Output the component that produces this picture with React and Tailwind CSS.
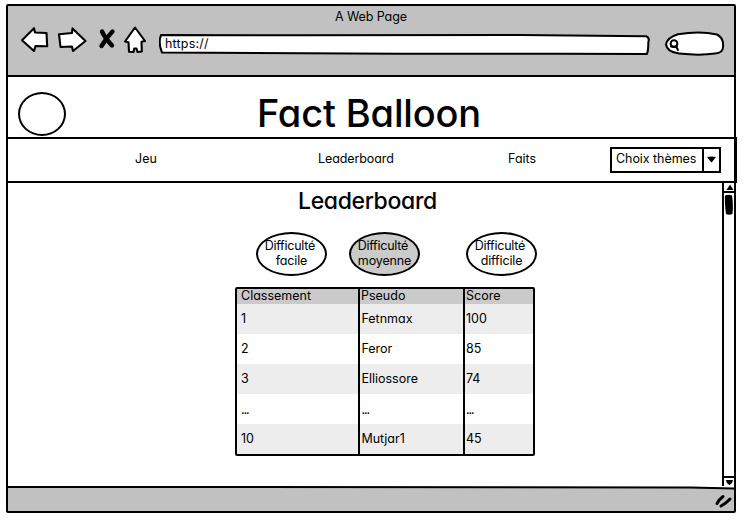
const rows = [
  ["1", "Fetnmax", "100"],
  ["2", "Feror", "85"],
  ["3", "Elliossore", "74"],
  ["...", "...", "..."],
  ["10", "Mutjar1", "45"],
];

function Toolbar() {
  return (
    <header className="flex h-[71px] flex-col border-b-2 border-black bg-[#c1c1c1]">
      <div className="h-[18px] text-center leading-[22px] tracking-[-0.1px]">A Web Page</div>
      <div className="flex h-[36px] pl-[10px]">
        <svg className="h-[36px] w-[136px]" viewBox="18 24 136 36" fill="white" stroke="black" strokeWidth="2.1" strokeLinejoin="round">
          <path d="M22 40.3 L34 28.2 L35 32.5 L46.5 33 L47.2 46.2 L35.5 46 L34 51 Z" />
          <path d="M59 34.2 L72 33 L72.5 28.4 L85.5 41 L73 51 L72 46.5 L60.5 47 Z" />
          <path d="M135 27.5 L145 41 L141.5 41.8 L141.8 51.5 L137.5 52 L136.5 48.5 L134.3 48.5 L133.5 52 L129 51.8 L128.5 42.2 L125 41.5 Z" />
          <path d="M102 31.5 Q105 38 112 45.5 M112.5 31.5 Q107 37 101.5 46" fill="none" strokeWidth="4.4" strokeLinecap="round" />
        </svg>
        <div className="mt-[10px] ml-[5px] flex h-[21px] w-[491px]">
          <svg className="h-[21px] w-[491px] shrink-0" viewBox="159 34 491 21" fill="white" stroke="black" strokeWidth="2" strokeLinejoin="round">
            <path d="M161 35 L300 35.2 L520 35 L646 36.2 Q650 38 648.3 42 Q648.5 50 647 54 L560 53.8 L400 53.8 L162 52.5 Q158 43 161 35 Z" />
          </svg>
          <span className="-ml-[485px] leading-[20px] tracking-[0.2px]">https://</span>
        </div>
        <svg className="mt-[6px] ml-[14px] h-[28px] w-[62px]" viewBox="664 30 62 28" fill="white" stroke="black" strokeWidth="2" strokeLinecap="round">
          <path d="M678 34.2 Q700 30.5 717 34.5 Q724 38 723 47 Q723 53 715 53.5 Q700 55.8 679 53.5 Q667 52 666 44.5 Q667 37.5 678 34.2 Z" />
          <circle cx="674" cy="43.6" r="3.4" />
          <path d="M676 46.5 L678 50 M671 46.5 L677 46.7" />
        </svg>
      </div>
    </header>
  );
}

function Nav() {
  return (
    <nav className="-mx-px flex h-[46px] items-center border-y-2 border-r-2 border-black -mr-[3px]">
      <span className="mb-[2px] ml-[128px] w-[183px] tracking-[0.1px]">Jeu</span>
      <span className="mb-[2px] w-[190px] tracking-[-0.1px]">Leaderboard</span>
      <span className="mb-[2px] w-[102px]">Faits</span>
      <div className="mb-px flex h-[26px] w-[111px] border-2 border-black">
        <span className="w-[92px] border-r-2 border-black pl-[4px] leading-[20px] whitespace-nowrap tracking-[-0.05px]">Choix thèmes</span>
        <svg className="mt-[7px] ml-[2px] h-[7px] w-[11px]" viewBox="0 0 11 7">
          <path d="M1 1 Q5.5 0 10 1 L6 6 Q5.5 6.5 5 6 Z" />
        </svg>
      </div>
    </nav>
  );
}

function Difficulty({ label, className }) {
  return (
    <div className={"flex h-[44px] w-[71px] flex-col items-center justify-center rounded-[50%] border-2 border-black pb-[2px] leading-[15px] whitespace-pre " + className}>
      <span className="tracking-[-0.25px]">{"Difficulté "}</span>
      <span className="tracking-[-0.15px]">{label}</span>
    </div>
  );
}

function Cell({ text, className }) {
  return (
    <span className={className + (text === "..." ? " leading-[31px] tracking-[-1.1px]" : "")}>{text}</span>
  );
}

function Scores() {
  return (
    <div className="mt-[11px] ml-[227px] w-[300px] rounded-[2px] border-2 border-black">
      <div className="grid h-[15px] grid-cols-[121px_105px_1fr] bg-[#cacaca] leading-[14px]">
        <span className="pl-[4px]">Classement</span>
        <span className="border-l-2 border-black pl-[1px]">Pseudo</span>
        <span className="border-l-2 border-black pl-[1px]">Score</span>
      </div>
      {rows.map(([rank, name, score]) => (
        <div key={rank} className="grid h-[30px] grid-cols-[121px_105px_1fr] leading-[29px] odd:bg-white even:bg-[#ededed]">
          <Cell text={rank} className="pl-[4px]" />
          <Cell text={name} className="border-l-2 border-black pl-[1.4px]" />
          <Cell text={score} className="border-l-2 border-black pl-[1px]" />
        </div>
      ))}
    </div>
  );
}

function Scrollbar() {
  return (
    <div className="flex w-[12px] flex-col items-center border-l-2 border-black">
      <div className="h-[10px] w-full border-b-2 border-black">
        <svg className="mt-px ml-[2px] h-[7px] w-[8px]" viewBox="0 0 8 7"><path d="M4 0.5 L7.5 6 L0.5 6 Z" /></svg>
      </div>
      <svg className="mt-px h-[21px] w-[10px]" viewBox="0 0 10 21">
        <path d="M1 1.5 Q5 0 8 1.5 Q9.5 10 8.5 20 Q5 21.5 2 20 Q0.5 10 1 1.5 Z" />
      </svg>
      <div className="mt-auto h-[10px] w-full border-t-2 border-black">
        <svg className="mt-[1px] ml-[1px] h-[7px] w-[9px]" viewBox="0 0 9 7"><path d="M0.8 1 L8 1 L7 4 L4.5 6.3 L2 4 Z" /></svg>
      </div>
    </div>
  );
}

export default function App() {
  return (
    <div className="h-[521px] w-[744px] overflow-hidden bg-white pt-[4px] pl-[6px] font-['Inter','Liberation_Sans',sans-serif] text-[12.5px] text-black [font-feature-settings:'cv11']">
      <div className="flex h-[509px] w-[730px] flex-col rounded-[2px] border-2 border-black bg-white">
        <Toolbar />
        <div className="flex h-[60px]">
          <div className="mt-[15px] ml-[10px] h-[44px] w-[48px] rounded-[50%] border-2 border-black" />
          <h1 className="ml-[191px] text-[38px] leading-[73px] font-medium tracking-[-0.15px] whitespace-nowrap">Fact Balloon</h1>
        </div>
        <Nav />
        <div className="flex h-[303px]">
          <main className="flex-1">
            <h2 className="ml-[290px] h-[49px] text-[23px] leading-[36px] font-medium tracking-[-0.35px] whitespace-nowrap">Leaderboard</h2>
            <div className="flex pl-[248px]">
              <Difficulty label="facile" className="bg-white" />
              <Difficulty label="moyenne" className="ml-[22px] bg-[#cbcbcb]" />
              <Difficulty label="difficile" className="ml-[46px] bg-white" />
            </div>
            <Scores />
          </main>
          <Scrollbar />
        </div>
        <footer className="flex flex-1 justify-end bg-[#c1c1c1]">
          <svg className="h-[25px] w-[726px]" viewBox="8 486 726 25" fill="none" stroke="black">
            <path d="M8 486 L734 486 L734 488.3 L690 487.6 L240 487 L8 487 Z" fill="white" stroke="none" />
            <path d="M8 487 L240 487 L690 487.6 L734 488.4" strokeWidth="2" />
            <path d="M717 503.5 Q719 499.5 723 496.5 M721 506 Q726 503.5 730 499" strokeWidth="3" strokeLinecap="round" />
          </svg>
        </footer>
      </div>
    </div>
  );
}
